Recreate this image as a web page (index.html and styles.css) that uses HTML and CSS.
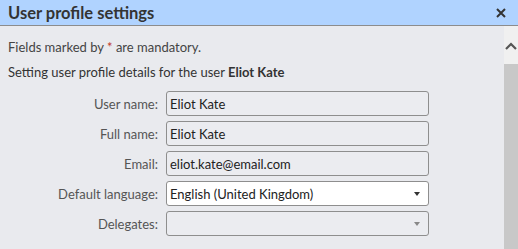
FILE: index.html
```html
<!DOCTYPE html>
<html lang="en">
<head>
    <meta charset="UTF-8">
    <title>User profile settings</title>
    <link rel="stylesheet" href="styles.css">
</head>
<body>
    <div class="dialog">
        <div class="dialog-header">
            <span class="dialog-title">User profile settings</span>
            <span class="dialog-close">
                <svg width="10" height="10" viewBox="0 0 10 10"><path d="M1 1 L9 9 M9 1 L1 9" stroke="#333" stroke-width="2"/></svg>
            </span>
        </div>
        <div class="dialog-main">
            <div class="dialog-body">
                <p class="note">Fields marked by <span class="req">*</span> are mandatory.</p>
                <p class="intro">Setting user profile details for the user <b>Eliot Kate</b></p>

                <div class="form">
                    <label class="form-label">User name:</label>
                    <div class="field">Eliot Kate</div>

                    <label class="form-label">Full name:</label>
                    <div class="field">Eliot Kate</div>

                    <label class="form-label">Email:</label>
                    <div class="field">eliot.kate@email.com</div>

                    <label class="form-label">Default language:</label>
                    <div class="field select active">English (United Kingdom)<span class="caret"></span></div>

                    <label class="form-label">Delegates:</label>
                    <div class="field select disabled"><span class="caret"></span></div>
                </div>
            </div>
            <div class="scrollbar">
                <div class="scroll-up">
                    <svg width="12" height="8" viewBox="0 0 12 8"><path d="M1 7 L6 2 L11 7" fill="none" stroke="#555" stroke-width="2.2"/></svg>
                </div>
                <div class="scroll-thumb"></div>
            </div>
        </div>
    </div>
</body>
</html>
```

FILE: styles.css
```css
body {
    margin: 0;
    font-family: 'Lato', sans-serif;
    background: #e9eaee;
    color: #333;
    overflow: hidden;
}

.dialog {
    width: 518px;
    height: 249px;
    display: flex;
    flex-direction: column;
}

.dialog-header {
    height: 25px;
    background: #b0d3ff;
    border-bottom: 1px solid #8c8c8c;
    display: flex;
    align-items: center;
    justify-content: space-between;
    padding: 0 12px 0 8px;
}

.dialog-title {
    font-size: 16.5px;
    font-weight: 700;
    color: #333;
}

.dialog-close {
    display: flex;
}

.dialog-main {
    flex: 1;
    display: flex;
}

.dialog-body {
    flex: 1;
    padding: 10px 8px 0 8px;
    font-size: 13px;
}

.note {
    margin: 3px 0 0 0;
    color: #444;
}

.req {
    color: #c0392b;
}

.intro {
    margin: 9px 0 0 0;
    color: #333;
}

.form {
    display: grid;
    grid-template-columns: 150px 263px;
    column-gap: 8px;
    row-gap: 5px;
    margin-top: 11px;
    align-items: center;
}

.form-label {
    text-align: right;
    color: #555;
}

.field {
    height: 23px;
    border: 1px solid #8e8e8e;
    border-radius: 3px;
    padding: 0 8px 0 3px;
    display: flex;
    align-items: center;
    justify-content: space-between;
    color: #222;
    background: #ebecf0;
}

.field.active {
    background: #fff;
}

.caret {
    width: 0;
    height: 0;
    margin-left: auto;
    border-left: 3px solid transparent;
    border-right: 3px solid transparent;
    border-top: 4px solid #333;
}

.field.disabled .caret {
    border-top-color: #888;
}

.scrollbar {
    width: 14px;
    background: #f0f0f0;
    display: flex;
    flex-direction: column;
}

.scroll-up {
    height: 36px;
    display: flex;
    align-items: center;
    justify-content: center;
    padding-top: 2px;
}

.scroll-thumb {
    flex: 1;
    background: #c8c8c8;
}
```
